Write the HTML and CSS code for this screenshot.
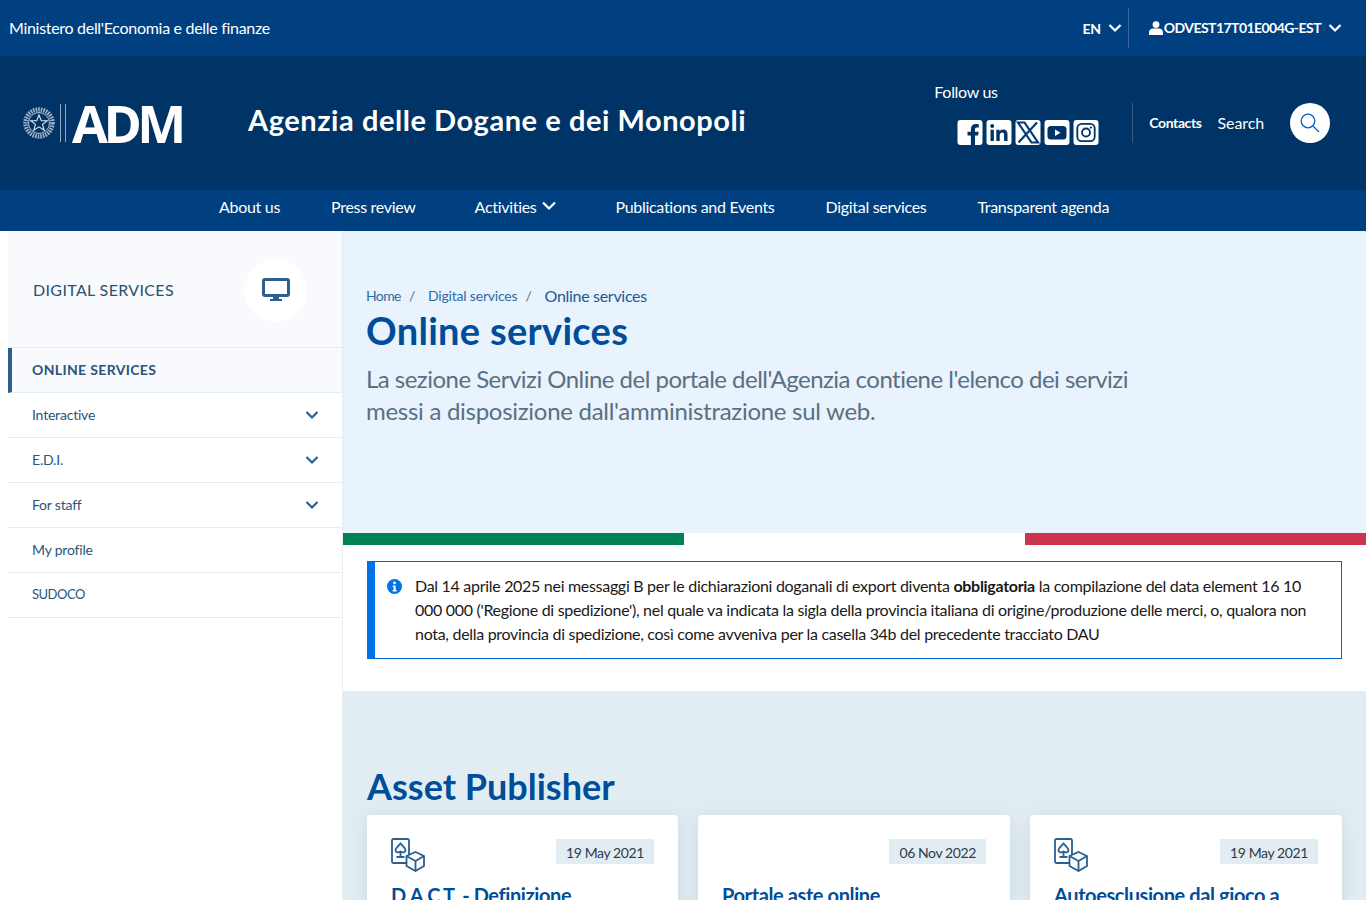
FILE: index.html
```html
<!DOCTYPE html>
<html lang="en">
<head>
<meta charset="utf-8">
<title>Online services</title>
<link rel="stylesheet" href="styles.css">
</head>
<body>
<div class="topbar">
  <span class="topbar-title">Ministero dell'Economia e delle finanze</span>
  <div class="topbar-right">
    <span class="lang">EN</span>
    <svg class="chev chev-w" viewBox="0 0 14 10"><path d="M1.5 2 7 7.5 12.5 2"/></svg>
    <span class="topbar-div"></span>
    <svg class="user" viewBox="0 0 14 14"><circle cx="7" cy="3.6" r="3.4"/><path d="M0 14v-2.2C0 9 2 7.6 4 7.6h6c2 0 4 1.4 4 4.2V14z"/></svg>
    <span class="username">ODVEST17T01E004G-EST</span>
    <svg class="chev chev-w chev-user" viewBox="0 0 14 10"><path d="M1.5 2 7 7.5 12.5 2"/></svg>
  </div>
</div>

<header class="header">
  <div class="logo">
    <svg class="emblem" viewBox="0 0 32 38">
      <circle cx="16" cy="19" r="13.500" fill="none" stroke="#9fb2c6" stroke-width="4.500" stroke-dasharray="1.600 1"/>
      <circle cx="16" cy="19" r="10.500" fill="none" stroke="#c3cfdb" stroke-width=".9"/>
      <path d="M16 11l2.300 5.700h5.900l-4.700 3.700 1.700 5.800-5.200-3.400-5.200 3.400 1.700-5.800-4.700-3.700h5.900z" fill="none" stroke="#dfe6ed" stroke-width="1.100"/>
    </svg>
    <span class="logo-strip"></span>
    <span class="logo-text">ADM</span>
  </div>
  <div class="site-title">Agenzia delle Dogane e dei Monopoli</div>
  <div class="header-right">
    <div class="follow">
      <span class="follow-label">Follow us</span>
      <div class="socials">
        <svg class="soc" viewBox="0 0 25 25"><rect width="25" height="25" rx="3" fill="#fff"/><path d="M17.500 25v-9.400h3.100l.6-3.800h-3.700V9.500c0-1.100.5-2 2.100-2h1.700V4.300c-.9-.1-1.900-.3-2.900-.3-3.100 0-5 1.900-5 5.100v2.700H10v3.800h3.400V25z" fill="#003366"/></svg>
        <svg class="soc" viewBox="0 0 25 25"><rect width="25" height="25" rx="3" fill="#fff"/><path d="M4 9.700h3.400V21H4zM5.700 4a2 2 0 1 1 0 4 2 2 0 0 1 0-4zM9.800 9.700H13v1.600c.6-1 1.900-1.900 3.700-1.900 3.500 0 4.300 2.300 4.300 5.300V21h-3.400v-5.500c0-1.400-.1-3.100-1.900-3.100s-2.500 1.400-2.500 3V21H9.800z" fill="#003366"/></svg>
        <svg class="soc" viewBox="0 0 25 25"><rect width="25" height="25" rx="3" fill="#fff"/><path d="M2.500 2.500 9 2.500 22.500 22.500 16 22.500ZM21.500 2.500 3 22.500" fill="none" stroke="#003a78" stroke-width="2.200"/></svg>
        <svg class="soc" viewBox="0 0 25 25"><rect width="25" height="25" rx="3" fill="#fff"/><rect x="3" y="6" width="19" height="13.500" rx="3.500" fill="#003366"/><path d="M10.500 9.500v6.500l5.500-3.200z" fill="#fff"/></svg>
        <svg class="soc" viewBox="0 0 25 25"><rect width="25" height="25" rx="3" fill="#fff"/><rect x="3.800" y="3.800" width="17.400" height="17.400" rx="4.500" fill="none" stroke="#003366" stroke-width="1.800"/><circle cx="12.500" cy="12.500" r="4" fill="none" stroke="#003366" stroke-width="1.800"/><circle cx="17.400" cy="7.600" r="1.100" fill="#003366"/></svg>
      </div>
    </div>
    <span class="header-div"></span>
    <a class="contacts">Contacts</a>
    <a class="search-label">Search</a>
    <span class="search-btn">
      <svg viewBox="0 0 20 20"><circle cx="8" cy="8" r="6.800"/><path d="M13 13l6 6"/></svg>
    </span>
  </div>
</header>

<nav class="nav">
  <a class="nav-item">About us</a>
  <a class="nav-item">Press review</a>
  <a class="nav-item nav-drop">Activities <svg class="chev chev-w chev-nav" viewBox="0 0 14 10"><path d="M1 1.500 7 7.500 13 1.500"/></svg></a>
  <a class="nav-item">Publications and Events</a>
  <a class="nav-item">Digital services</a>
  <a class="nav-item">Transparent agenda</a>
</nav>

<div class="layout">
  <aside class="sidebar">
    <div class="side-head">
      <span class="side-title">DIGITAL SERVICES</span>
      <span class="side-icon">
        <svg viewBox="0 0 28 24"><rect x="1.500" y="1.500" width="25" height="16" rx="1.500" fill="none" stroke="#2a5f8f" stroke-width="3"/><path d="M11 19h6v2h3v2H8v-2h3z" fill="#2a5f8f"/></svg>
      </span>
    </div>
    <div class="side-row side-active"><span>ONLINE SERVICES</span></div>
    <div class="side-row"><span>Interactive</span><svg class="chev chev-b" viewBox="0 0 14 10"><path d="M1.500 2 7 7.500 12.500 2"/></svg></div>
    <div class="side-row"><span>E.D.I.</span><svg class="chev chev-b" viewBox="0 0 14 10"><path d="M1.500 2 7 7.500 12.500 2"/></svg></div>
    <div class="side-row"><span>For staff</span><svg class="chev chev-b" viewBox="0 0 14 10"><path d="M1.500 2 7 7.500 12.500 2"/></svg></div>
    <div class="side-row"><span>My profile</span></div>
    <div class="side-row"><span class="side-caps">SUDOCO</span></div>
  </aside>

  <main class="main">
    <section class="hero">
      <div class="crumbs">
        <a class="crumb-home">Home</a><span class="sep">/</span><a>Digital services</a><span class="sep">/</span><span class="crumb-cur">Online services</span>
      </div>
      <h1 class="hero-title">Online services</h1>
      <p class="hero-text">La sezione Servizi Online del portale dell'Agenzia contiene l'elenco dei servizi<br><span class="hero-line2">messi a disposizione dall'amministrazione sul web.</span></p>
    </section>
    <div class="flag"><span class="f-g"></span><span class="f-w"></span><span class="f-r"></span></div>
    <section class="notice">
      <div class="alert">
        <svg class="alert-icon" viewBox="0 0 16 16"><circle cx="8" cy="8" r="8" fill="#0073e6"/><circle cx="8" cy="4.200" r="1.500" fill="#fff"/><path d="M6 6.800h3.200v5h1v1.500H6v-1.500h1V8.300H6z" fill="#fff"/></svg>
        <p>Dal 14 aprile 2025 nei messaggi B per le dichiarazioni doganali di export diventa <b>obbligatoria</b> la compilazione del data element 16 10<br>000 000 ('Regione di spedizione'), nel quale va indicata la sigla della provincia italiana di origine/produzione delle merci, o, qualora non<br>nota, della provincia di spedizione, così come avveniva per la casella 34b del precedente tracciato DAU</p>
      </div>
    </section>
    <section class="assets">
      <h2 class="assets-title">Asset Publisher</h2>
      <div class="cards">
        <article class="card">
          <div class="card-top">
            <svg class="card-icon" viewBox="0 0 34 34" fill="none" stroke="#2a5f8f" stroke-width="1.800"><rect x="1" y="1" width="17" height="24" rx="1.500"/><path d="M9.500 5.500c2 2.500 5 4.500 5 7 0 2-3 2.500-5 1-2 1.500-5 1-5-1 0-2.500 3-4.500 5-7zM9.500 13v5.500M5.500 19h8"/><path d="M24.500 14l8.500 4v10l-8.500 5-9-5V18z" fill="#fff"/><path d="M15.500 18l9 5 8.500-5M24.500 23v10"/><path d="M24.500 17.500h.1M19 23h.1M21.500 28h.1M28 24.500h.1M30.500 27h.1" stroke-width="2"/></svg>
            <span class="date">19 May 2021</span>
          </div>
          <h3 class="card-title">D.A.C.T. - Definizione</h3>
        </article>
        <article class="card">
          <div class="card-top card-top-noicon">
            <span class="date">06 Nov 2022</span>
          </div>
          <h3 class="card-title">Portale aste online</h3>
        </article>
        <article class="card">
          <div class="card-top">
            <svg class="card-icon" viewBox="0 0 34 34" fill="none" stroke="#2a5f8f" stroke-width="1.800"><rect x="1" y="1" width="17" height="24" rx="1.500"/><path d="M9.500 5.500c2 2.500 5 4.500 5 7 0 2-3 2.500-5 1-2 1.500-5 1-5-1 0-2.500 3-4.500 5-7zM9.500 13v5.500M5.500 19h8"/><path d="M24.500 14l8.500 4v10l-8.500 5-9-5V18z" fill="#fff"/><path d="M15.500 18l9 5 8.500-5M24.500 23v10"/><path d="M24.500 17.500h.1M19 23h.1M21.500 28h.1M28 24.500h.1M30.500 27h.1" stroke-width="2"/></svg>
            <span class="date">19 May 2021</span>
          </div>
          <h3 class="card-title">Autoesclusione dal gioco a</h3>
        </article>
      </div>
    </section>
  </main>
</div>
</body>
</html>
```
FILE: styles.css
```css
* { box-sizing: border-box; }
html, body { margin: 0; height: 900px; overflow: hidden; }
body { font-family: Lato, "Noto Sans", sans-serif; color: #17324d; background: #fff; letter-spacing: -.3px; }
h1, h2, h3, p { margin: 0; }

.chev { fill: none; stroke-width: 2.2; display: block; }
.chev-w { stroke: #fff; width: 14px; height: 10px; }
.chev-b { stroke: #2a5f8f; width: 14px; height: 10px; }

.topbar { height: 56px; background: #004080; color: #fff; display: flex; align-items: center; justify-content: space-between; padding: 0 24px 0 9px; }
.topbar-title { font-size: 16px; padding-bottom: 2px; }
.topbar-right { display: flex; align-items: center; }
.lang { font-size: 14px; font-weight: 700; }
.topbar-right .chev-w { margin-left: 7px; }
.topbar-div { width: 1px; height: 40px; background: #3a689c; margin: 0 20px 0 6px; }
.user { width: 14px; height: 14px; fill: #fff; margin-right: 1px; }
.username { font-size: 14px; font-weight: 700; letter-spacing: -.55px; padding-bottom: 2px; }

.header { height: 134px; background: #003366; color: #fff; display: flex; align-items: center; padding: 0 36px 0 23px; }
.logo { display: flex; align-items: center; width: 225px; margin-top: -1px; }
.emblem { width: 32px; height: 38px; }
.logo-strip { width: 6px; height: 38px; margin-left: 5px; border-left: 1px solid #8fa6bd; border-right: 1px solid #8fa6bd; }
.logo-text { font-family: "Open Sans", sans-serif; font-size: 52px; font-weight: 700; line-height: 38px; letter-spacing: -4.5px; margin-left: 6px; }
.site-title { font-size: 29px; font-weight: 700; letter-spacing: .55px; margin-top: -7px; }
.header-right { margin-left: auto; display: flex; align-items: center; }
.follow { display: flex; flex-direction: column; margin-right: 33px; margin-top: -19px; }
.follow-label { font-size: 16px; margin-bottom: 19px; }
.socials { display: flex; gap: 3px; margin-left: 23px; }
.soc { width: 26px; height: 25px; }
.header-div { width: 1px; height: 40px; background: #35597f; margin-right: 16px; }
.contacts { font-size: 14px; font-weight: 700; letter-spacing: -.4px; margin-right: 16px; padding-bottom: 2px; }
.search-label { font-size: 16px; letter-spacing: -.1px; margin-right: 26px; padding-bottom: 2px; }
.search-btn { width: 40px; height: 40px; border-radius: 50%; background: #fff; display: flex; align-items: center; justify-content: center; }
.search-btn svg { width: 20px; height: 20px; fill: none; stroke: #0066cc; stroke-width: 1.300; }

.nav { height: 41px; background: #004080; color: #fff; display: flex; align-items: center; padding: 0 0 9px 219px; gap: 51px; font-size: 16px; }
.nav-drop { display: flex; align-items: center; gap: 4px; margin: 0 8px; }
.chev-nav { width: 16px; }

.layout { display: flex; padding-left: 8px; }
.sidebar { width: 334px; flex: none; }
.side-head { height: 117px; background: #f8fafe; border-bottom: 1px solid #e3edf5; display: flex; align-items: center; justify-content: space-between; padding: 0 35px 0 25px; }
.side-title { font-size: 16px; letter-spacing: .35px; color: #2d4f6f; margin-top: 1px; }
.side-icon { width: 63px; height: 63px; border-radius: 50%; background: #fff; display: flex; align-items: center; justify-content: center; margin-top: 2px; }
.side-icon svg { width: 28px; height: 24px; }
.side-row { height: 45px; border-bottom: 1px solid #e3edf5; display: flex; align-items: center; justify-content: space-between; padding: 0 23px 0 24px; font-size: 14px; letter-spacing: -.2px; color: #2a5578; }
.side-row span { padding-bottom: 2px; }
.side-row .side-caps { font-size: 13px; letter-spacing: -.5px; }
.side-active { background: #f8fafe; border-left: 4px solid #2a5f8f; padding-left: 20px; font-weight: 700; letter-spacing: .35px; }

.main { flex: 1; border-left: 1px solid #e3edf5; min-width: 0; }
.hero { height: 302px; background: #e8f3fd; padding: 54px 24px 0 23px; }
.crumbs { display: flex; align-items: center; font-size: 14px; letter-spacing: -.2px; color: #2a6ba3; height: 20px; }
.crumb-home { letter-spacing: -.6px; }
.sep { margin: 0 13px 0 8px; color: #5c6f82; }
.crumb-cur { font-size: 16px; letter-spacing: -.3px; color: #1c5a94; }
.hero-title { font-size: 38px; font-weight: 700; letter-spacing: .3px; color: #004d99; line-height: 50px; }
.hero-text { font-size: 24px; line-height: 32px; letter-spacing: -.52px; color: #5c6f82; margin-top: 8px; }
.hero-line2 { letter-spacing: -.28px; }

.flag { display: flex; height: 12px; }
.flag span { flex: 1; }
.f-g { background: #008055; }
.f-w { background: #fff; }
.f-r { background: #cc334d; }

.notice { height: 146px; padding: 16px 24px 0; background: #fff; }
.alert { height: 98px; border: 1px solid #0066cc; border-left: 8px solid #0073e6; display: flex; padding: 12px 16px 0 12px; color: #19191a; }
.alert-icon { width: 15px; height: 15px; flex: none; margin: 5px 13px 0 0; }
.alert p { font-size: 16px; line-height: 24px; white-space: nowrap; }

.assets { background: #e2edf3; padding: 71px 24px 0; height: 300px; }
.assets-title { font-size: 36px; font-weight: 700; letter-spacing: 0; color: #004d99; line-height: 48px; }
.cards { display: grid; grid-template-columns: 311px 1fr 1fr; gap: 20px; margin-top: 5px; }
.card { background: #fff; border-radius: 4px; height: 200px; padding: 24px; box-shadow: 0 2px 18px rgba(0, 51, 102, .1); }
.card-top { display: flex; align-items: flex-start; justify-content: space-between; height: 34px; }
.card-top-noicon { justify-content: flex-end; }
.card-icon { width: 34px; height: 34px; margin-top: -1px; }
.date { height: 25px; background: #e2edf3; padding: 0 10px; font-size: 14px; line-height: 27px; color: #2f3b47; letter-spacing: -.4px; }
.card-title { font-size: 20px; font-weight: 700; letter-spacing: -.4px; color: #004d99; line-height: 28px; margin-top: 8px; }
```
